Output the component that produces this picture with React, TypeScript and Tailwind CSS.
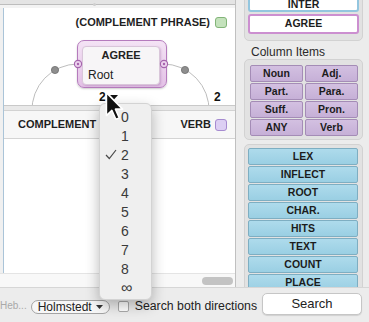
import React from 'react';

const purpleRows = [
  ['Noun', 'Adj.'],
  ['Part.', 'Para.'],
  ['Suff.', 'Pron.'],
  ['ANY', 'Verb'],
];
const blueItems = ['LEX', 'INFLECT', 'ROOT', 'CHAR.', 'HITS', 'TEXT', 'COUNT', 'PLACE'];
const levels = ['0', '1', '2', '3', '4', '5', '6', '7', '8', '∞'];

// the phrase diagram: arcs, dots and the AGREE node
const Diagram: React.FC = () => (
  <div className="relative h-[97px] overflow-hidden bg-white">
    <div className="absolute right-[8px] top-[9px] h-[11px] flex items-center gap-[5px]">
      <span className="text-[11px] font-bold leading-none text-[#1f1f1f]">(COMPLEMENT PHRASE)</span>
      <span className="w-[12px] h-[11px] rounded-[3px] border border-[#82b478] bg-[#c4e2bc]" />
    </div>

    <svg className="absolute left-[-4px] top-[-8px]" width="236" height="112">
      <path d="M 32 112 A 46 46 0 0 1 78 64" fill="none" stroke="#bdbdbd" strokeWidth="1" />
      <path d="M 163 64 A 46 46 0 0 1 209 112" fill="none" stroke="#bdbdbd" strokeWidth="1" />
      <circle cx="55" cy="70" r="3.6" fill="#8e8e8e" stroke="#6d6d6d" strokeWidth="0.8" />
      <circle cx="185" cy="70" r="3.6" fill="#8e8e8e" stroke="#6d6d6d" strokeWidth="0.8" />
      <polygon points="110,95 118,95 114,99.5" fill="#111" />
    </svg>

    <div className="absolute left-[73px] top-[32px] w-[90px] h-[48px] rounded-[7px] border border-[#b57bbd] bg-gradient-to-b from-[#f4e3f5] to-[#e3c1e6] pt-[5px] pl-[4px] pr-[6px] pb-[2px] shadow-[0_1px_2px_rgba(0,0,0,0.2)]">
      <div className="h-full rounded-[4px] border border-[#d9c6da] bg-[#f7f5f7] shadow-[1px_1px_2px_rgba(120,60,130,0.25)] flex flex-col">
        <div className="text-center text-[11px] font-bold leading-none mt-[3px] text-[#222]">AGREE</div>
        <div className="text-[12px] leading-none mt-[8px] ml-[5px] text-[#222]">Root</div>
      </div>
    </div>

    <svg className="absolute left-[-4px] top-[-8px]" width="236" height="112">
      <circle cx="78" cy="64" r="3.6" fill="#ecd2ee" stroke="#a564ad" strokeWidth="1.1" />
      <circle cx="78" cy="64" r="1.2" fill="#a564ad" />
      <circle cx="164" cy="64" r="3.6" fill="#ecd2ee" stroke="#a564ad" strokeWidth="1.1" />
      <circle cx="164" cy="64" r="1.2" fill="#a564ad" />
    </svg>

    <span className="absolute left-[95px] top-[83px] text-[12px] font-bold leading-none text-[#111]">2</span>
    <span className="absolute left-[210px] top-[83px] text-[12px] font-bold leading-none text-[#111]">2</span>
  </div>
);

const LeftPane: React.FC = () => (
  <div className="w-[236px] h-full flex flex-col border-r border-[#c0c0c0]">
    <div className="h-[4px] bg-[#e4e4e4]" />
    <div className="relative h-[1px] bg-[#bdbdbd]">
      <span className="absolute left-[93px] top-[-1px] w-[3px] h-[3px] rounded-full bg-[#cfcfcf]" />
    </div>
    <div className="h-[3px] bg-[#f3f3f3]" />
    <div className="flex-1 flex bg-[#f0f0f0] pl-[3px]">
      <div className="flex-1 flex flex-col border-l border-[#aac4d8] bg-white">
        <Diagram />
        <div className="h-[1px] bg-[#c9c9c9]" />
        <div className="h-[4px] bg-[#e9e9e9]" />
        <div className="h-[1px] bg-[#d2d2d2]" />
        <div className="h-[28px] flex items-center justify-between pl-[14px] pr-[8px] bg-[#f7f7f7] border-b border-[#d4d4d4]">
          <div className="flex items-center gap-[3px]">
            <span className="text-[11px] font-bold text-[#1f1f1f]">COMPLEMENT</span>
            <span className="w-[12px] h-[12px] rounded-[3px] border border-[#82b478] bg-[#c4e2bc]" />
          </div>
          <div className="flex items-center gap-[4px]">
            <span className="text-[11px] font-bold text-[#1f1f1f]">VERB</span>
            <span className="w-[12px] h-[12px] rounded-[3px] border border-[#a68bd0] bg-[#dccff3]" />
          </div>
        </div>
        <div className="flex-1 bg-white" />
      </div>
    </div>
    <div className="h-[14px] flex items-center justify-end pr-[2px] bg-[#f8f8f8] border-t border-[#e4e4e4]">
      <span className="w-[31px] h-[8px] rounded-full bg-[#c3c3c3]" />
    </div>
  </div>
);

const RightPanel: React.FC = () => (
  <div className="flex-1 h-full flex flex-col pl-[8px] pr-[6px] overflow-hidden">
    <div className="-mt-[12px] rounded-[5px] border border-[#d2d2d2] bg-[#e2e2e2] px-[3px] pt-[3px] pb-[6px] flex flex-col gap-[2px]">
      <div className="h-[20px] rounded-[3px] border-2 border-[#93c6df] bg-white flex items-end justify-center pb-[1px] text-[10.5px] leading-none font-bold text-[#1c1c1c]">INTER</div>
      <div className="h-[20px] rounded-[3px] border-2 border-[#cc8fd0] bg-white flex items-center justify-center text-[10.5px] font-bold text-[#1c1c1c]">AGREE</div>
    </div>
    <div className="mt-[4px] ml-[7px] h-[14px] text-[12px] leading-[14px] text-[#2a2a2a]">Column Items</div>
    <div className="rounded-[5px] border border-[#d2d2d2] bg-[#e2e2e2] pl-[5px] pr-[4px] pt-[5px] pb-[3px] grid grid-cols-2 gap-x-[2px] gap-y-[1px]">
      {purpleRows.flat().map((label) => (
        <div
          key={label}
          className="h-[17px] rounded-[2px] border border-[#a48cb6] bg-gradient-to-b from-[#d3c0e1] to-[#c6b0d7] flex items-center justify-center text-[10.5px] font-bold text-[#1c1c1c]"
        >
          {label}
        </div>
      ))}
    </div>
    <div className="mt-[4px] rounded-[5px] border border-[#d2d2d2] bg-[#e2e2e2] pl-[3px] pr-[4px] pt-[3px] pb-[3px] flex flex-col gap-[1px]">
      {blueItems.map((label) => (
        <div
          key={label}
          className="h-[17px] flex-none rounded-[2px] border border-[#7eaec2] bg-gradient-to-b from-[#aedbec] to-[#9acfe3] flex items-center justify-center text-[10.5px] font-bold text-[#1c1c1c]"
        >
          {label}
        </div>
      ))}
    </div>
  </div>
);

const BottomBar: React.FC = () => (
  <div className="h-[35px] flex-none flex items-start bg-[#ececec] border-t border-[#d6d6d6] relative z-10">
    <span className="mt-[13px] ml-[0px] text-[10px] leading-none text-[#a9a9a9]">Heb...</span>
    <div className="mt-[12px] ml-[4px] w-[79px] h-[14px] rounded-full border border-[#a3a3a3] bg-[#f7f7f7] flex items-center justify-center gap-[4px]">
      <span className="text-[12px] leading-none text-[#222]">Holmstedt</span>
      <svg width="7" height="4" viewBox="0 0 7 4">
        <polygon points="0,0 7,0 3.5,4" fill="#333" />
      </svg>
    </div>
    <span className="mt-[13px] ml-[8px] w-[11px] h-[11px] rounded-[2px] border border-[#aaaaaa] bg-white" />
    <span className="mt-[12px] ml-[6px] text-[12.3px] leading-none text-[#222] whitespace-nowrap">Search both directions</span>
    <div className="absolute left-[262px] top-[5px] w-[100px] h-[22px] rounded-[5px] border border-[#c6c6c6] bg-white shadow-[0_1px_1px_rgba(0,0,0,0.12)] flex items-center justify-center text-[13px] text-[#222]">
      Search
    </div>
  </div>
);

const LevelMenu: React.FC = () => (
  <div className="absolute left-[99px] top-[103px] w-[53px] h-[197px] rounded-[6px] border border-[#d3d3d3] bg-[#efefef] shadow-[0_5px_14px_rgba(0,0,0,0.28)] py-[3px] z-20">
    {levels.map((n) => (
      <div key={n} className="relative h-[19px] flex items-center pl-[21px] text-[14px] text-[#3a3a3a]">
        {n === '2' && (
          <svg className="absolute left-[5px] top-[4px]" width="12" height="11" viewBox="0 0 12 11">
            <path d="M1 6 L4.3 9.5 L11 1" fill="none" stroke="#4a4a4a" strokeWidth="1.2" />
          </svg>
        )}
        <span className={n === '∞' ? 'text-[16px] leading-none' : 'leading-none'}>{n}</span>
      </div>
    ))}
  </div>
);

const Cursor: React.FC = () => (
  <svg className="absolute left-[105px] top-[91px] z-30" width="20" height="32" viewBox="0 0 14 22">
    <path
      d="M1 1 L1 17 L4.8 13.4 L7.6 19.6 L10 18.6 L7.3 12.5 L12.3 12.5 Z"
      fill="#111"
      stroke="#fff"
      strokeWidth="1.1"
      strokeLinejoin="round"
    />
  </svg>
);

const App: React.FC = () => {
  return (
    <div className="relative w-[369px] h-[322px] overflow-hidden flex flex-col bg-[#ececec] font-['Liberation_Sans',Arial,sans-serif]">
      <div className="flex h-[287px] flex-none">
        <LeftPane />
        <RightPanel />
      </div>
      <BottomBar />
      <LevelMenu />
      <Cursor />
    </div>
  );
};

export default App;
